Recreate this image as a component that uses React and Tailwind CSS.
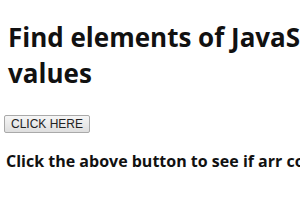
export default function App() {
	return (
		<div className="w-[300px] h-[210px] overflow-hidden bg-white text-[#111] font-['Open_Sans',sans-serif]">
			<h1 className="pl-[8px] pt-[19px] text-[26px] font-bold leading-[36px] whitespace-nowrap">
				Find elements of JavaScript array
				<br />
				values
			</h1>
			<button className="ml-[4px] mt-[24px] h-[18px] px-[6px] border border-[#a9a9a9] rounded-[2px] bg-gradient-to-b from-[#f6f6f6] to-[#dedede] text-[12px] leading-none text-[#222] font-['Liberation_Sans',sans-serif]">
				CLICK HERE
			</button>
			<p className="pl-[6px] mt-[15px] text-[16px] font-bold whitespace-nowrap">
				Click the above button to see if arr contains the values
			</p>
		</div>
	)
}
